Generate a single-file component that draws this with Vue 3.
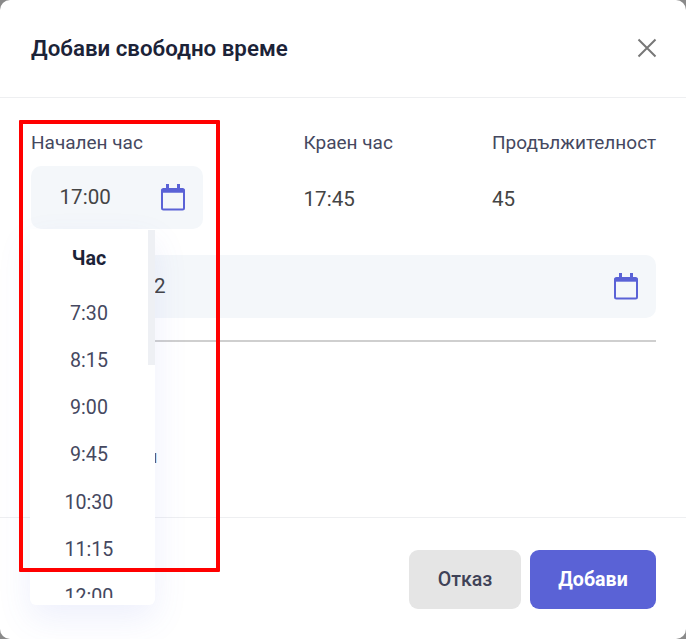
<script setup>
const hours = ['7:30', '8:15', '9:00', '9:45', '10:30', '11:15', '12:00']
</script>

<template>
  <div class="modal">
    <header class="head">
      <h2 class="title">Добави свободно време</h2>
      <svg class="close" width="20" height="20" viewBox="0 0 20 20"><path d="M1.5 1.5l17 17M18.5 1.5l-17 17" fill="none" stroke="#777" stroke-width="2"/></svg>
    </header>

    <main class="body">
      <div class="cols">
        <div class="col start">
          <label class="label">Начален час</label>
          <div class="input">
            <span class="time">17:00</span>
            <svg class="cal" width="26" height="28" viewBox="0 0 26 28"><g fill="none" stroke="#5a62d6"><rect x="2" y="6" width="22" height="20.5" rx="1.5" stroke-width="2"/><path d="M1.5 8h23" stroke-width="3.4"/><path d="M7.5 1v5M18.5 1v5" stroke-width="3"/></g></svg>
          </div>
          <div class="popup">
            <div class="scrollbar"></div>
            <div class="list">
              <div class="list-head">Час</div>
              <div v-for="h in hours" :key="h" class="item">{{ h }}</div>
            </div>
          </div>
        </div>
        <div class="col">
          <label class="label">Краен час</label>
          <div class="value">17:45</div>
        </div>
        <div class="col">
          <label class="label">Продължителност</label>
          <div class="value">45</div>
        </div>
      </div>

      <div class="date">
        <span class="date-text">2</span>
        <svg class="cal" width="26" height="28" viewBox="0 0 26 28"><g fill="none" stroke="#5a62d6"><rect x="2" y="6" width="22" height="20.5" rx="1.5" stroke-width="2"/><path d="M1.5 8h23" stroke-width="3.4"/><path d="M7.5 1v5M18.5 1v5" stroke-width="3"/></g></svg>
      </div>
      <div class="rule"></div>
      <div class="hidden-text">н</div>
    </main>

    <footer class="foot">
      <button class="btn cancel">Отказ</button>
      <button class="btn add">Добави</button>
    </footer>

    <div class="marker"></div>
  </div>
</template>

<style scoped>
.modal {
  position: relative;
  width: 686px;
  height: 639px;
  box-sizing: border-box;
  display: flex;
  flex-direction: column;
  background: #fff;
  border-radius: 10px;
  overflow: hidden;
  font-family: Roboto, sans-serif;
}
.head {
  height: 98px;
  box-sizing: border-box;
  border-bottom: 1px solid #eeeff1;
  padding: 0 29px 2px 31px;
  display: flex;
  align-items: center;
  justify-content: space-between;
}
.title {
  margin: 0;
  font-size: 22.3px;
  line-height: 26px;
  font-weight: 600;
  color: #1c2338;
}
.close { display: block; }
.body {
  flex: 1;
  padding: 35px 30px 0 31px;
}
.cols {
  display: grid;
  grid-template-columns: 272.5px 188.5px auto;
}
.col { position: relative; }
.start > .input { width: 172px; }
.label {
  display: block;
  font-size: 19px;
  line-height: 20px;
  color: #454860;
}
.input {
  margin-top: 13px;
  height: 63px;
  box-sizing: border-box;
  background: #f4f7fa;
  border-radius: 10px;
  display: flex;
  align-items: center;
  justify-content: space-between;
  padding: 0 17px 2px 28.5px;
}
.time, .value, .date-text {
  font-size: 20.6px;
  color: #444;
}
.value {
  margin-top: 13px;
  height: 63px;
  line-height: 66px;
}
.cal { display: block; }
.popup {
  position: absolute;
  left: -1px;
  top: 96px;
  width: 125px;
  height: 376px;
  background: #fff;
  border-radius: 0 0 6px 6px;
  box-shadow: 0 14px 34px rgba(90, 110, 230, 0.1);
  z-index: 2;
}
.scrollbar {
  position: absolute;
  top: 1px;
  right: 0;
  width: 7px;
  height: 135px;
  background: #eef0f4;
}
.list {
  height: 369px;
  overflow: hidden;
  text-align: center;
  width: 118px;
}
.list-head {
  height: 60.5px;
  line-height: 59px;
  font-size: 19.6px;
  font-weight: 700;
  color: #1c2338;
}
.item {
  height: 47.3px;
  line-height: 47.3px;
  font-size: 19.6px;
  color: #454860;
}
.date {
  margin-top: 26px;
  height: 63px;
  box-sizing: border-box;
  background: #f4f7fa;
  border-radius: 10px;
  display: flex;
  align-items: center;
  justify-content: space-between;
  padding: 0 17px 2px 123px;
}
.rule {
  margin-top: 22px;
  height: 2px;
  background: #cfcfcf;
}
.hidden-text {
  margin-top: 105px;
  padding-left: 116px;
  font-size: 18px;
  line-height: 20px;
  color: #555;
}
.foot {
  height: 122px;
  box-sizing: border-box;
  border-top: 1px solid #eeeff1;
  padding: 32px 30px 0 0;
  display: flex;
  justify-content: flex-end;
  align-items: flex-start;
  gap: 9px;
}
.btn {
  height: 59px;
  border: 0;
  border-radius: 9px;
  font-family: inherit;
  font-size: 19.6px;
  font-weight: 500;
  padding: 0;
}
.cancel { width: 112px; background: #e5e5e5; color: #3f4257; }
.add { width: 126px; background: #5a62d6; color: #fff; font-weight: 700; }
.marker {
  position: absolute;
  left: 18.5px;
  top: 119.5px;
  width: 201px;
  height: 452.5px;
  box-sizing: border-box;
  border: 4px solid #ff0000;
  border-radius: 1px;
  z-index: 3;
  pointer-events: none;
}
</style>

<style>
html, body { background: #8a8a8a; }
</style>
